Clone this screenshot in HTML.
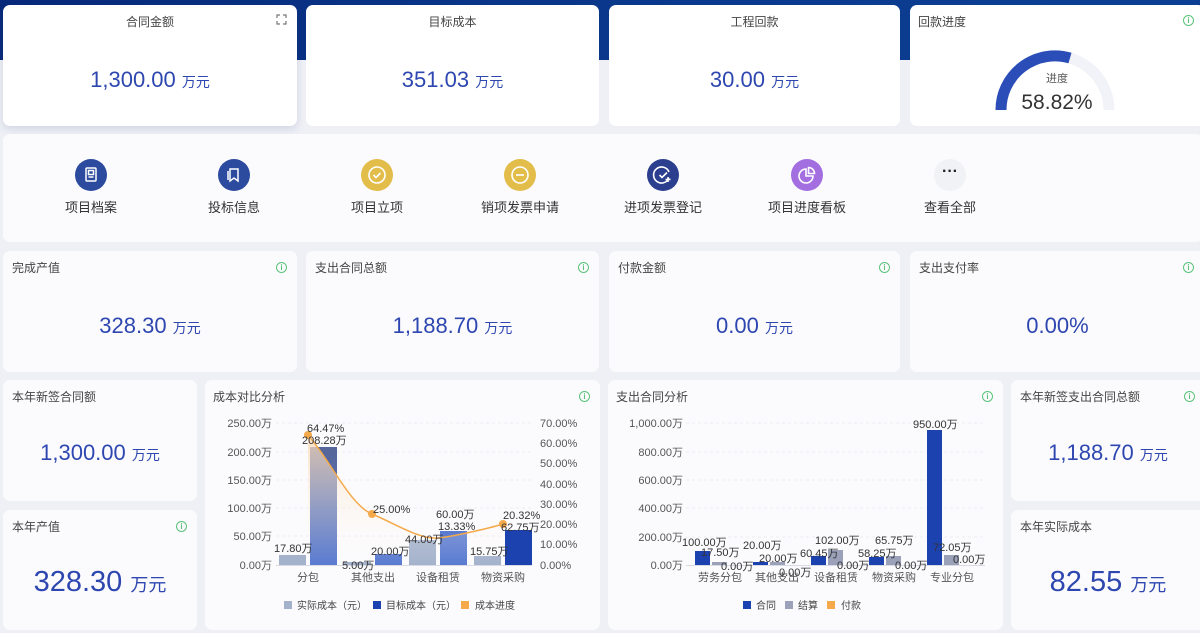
<!DOCTYPE html>
<html><head><meta charset="utf-8"><style>
*{margin:0;padding:0;box-sizing:border-box}
body{width:1200px;height:633px;overflow:hidden;background:#eef0f6;font-family:"Liberation Sans","Noto Sans CJK SC",sans-serif;position:relative;color:#333}
.band{position:absolute;left:0;top:0;width:1200px;height:60px;background:linear-gradient(90deg,#08297a,#0a3a8e 60%,#0c3f93)}
.c{position:absolute;background:#fbfbfd;border-radius:7px}
.w{background:#fff}
.t{position:absolute;font-size:12px;color:#444}
.tc{left:0;right:0;text-align:center;top:8px}
.tl{left:9px;top:8px}
.v{position:absolute;left:0;right:0;text-align:center;color:#2e47b0;font-size:22px}
.v span{font-size:14px}
.big{font-size:29px}.big span{font-size:18px}
.i{position:absolute;width:11px;height:11px;border:1.3px solid #5bc27a;border-radius:50%;color:#5bc27a;font-size:8px;line-height:9px;text-align:center;font-weight:bold}
.ic{position:absolute;top:159px;width:32px;height:32px;border-radius:50%}
.lb{position:absolute;top:197px;font-size:13px;color:#333;width:120px;text-align:center}
svg text{font-family:"Liberation Sans","Noto Sans CJK SC",sans-serif}
</style></head><body>
<div class="band"></div>

<div class="c w" style="left:3px;top:5px;width:294px;height:121px;box-shadow:0 3px 8px rgba(60,60,120,.15)"><div class="t tc">合同金额</div>
<svg style="position:absolute;left:273px;top:9px" width="11" height="11" viewBox="0 0 11 11" fill="none" stroke="#777" stroke-width="1.2"><path d="M1 4V1h3M7 1h3v3M10 7v3H7M4 10H1V7"/></svg>
<div class="v" style="top:62px">1,300.00 <span>万元</span></div></div>
<div class="c w" style="left:306px;top:5px;width:293px;height:121px"><div class="t tc">目标成本</div><div class="v" style="top:62px">351.03 <span>万元</span></div></div>
<div class="c w" style="left:609px;top:5px;width:291px;height:121px"><div class="t tc">工程回款</div><div class="v" style="top:62px">30.00 <span>万元</span></div></div>
<div class="c w" style="left:910px;top:5px;width:295px;height:121px"><div class="t" style="left:8px;top:8px">回款进度</div><div class="i" style="left:273px;top:10px">i</div>
<svg style="position:absolute;left:0;top:0" width="290" height="121"><path d="M91 105A54 54 0 0 1 199 105" fill="none" stroke="#f1f3f8" stroke-width="11"/><path d="M91 105A54 54 0 0 1 160 53" fill="none" stroke="#2a4db8" stroke-width="11"/>
<text x="147" y="77" font-size="11" fill="#555" text-anchor="middle">进度</text><text x="147" y="104" font-size="21" fill="#333" text-anchor="middle">58.82%</text></svg></div>

<div class="c" style="left:3px;top:134px;width:1200px;height:108px"></div>
<div class="ic" style="left:75px;background:#2c4a9e"><svg width="32" height="32" fill="none" stroke="#fff" stroke-width="1.5"><rect x="11" y="9" width="10" height="13" rx="1"/><rect x="13.5" y="11.5" width="5" height="4"/><path d="M13.5 18h5"/></svg></div>
<div class="lb" style="left:31px">项目档案</div>
<div class="ic" style="left:218px;background:#2c4a9e"><svg width="32" height="32" fill="none" stroke="#fff" stroke-width="1.5"><path d="M12 10h8v12l-4-3-4 3z"/><path d="M10 12v9"/></svg></div>
<div class="lb" style="left:174px">投标信息</div>
<div class="ic" style="left:361px;background:#e3bd4a"><svg width="32" height="32" fill="none" stroke="#fff" stroke-width="1.6"><circle cx="16" cy="16" r="8"/><path d="M12.5 16l2.5 2.5 4.5-4.5"/></svg></div>
<div class="lb" style="left:317px">项目立项</div>
<div class="ic" style="left:504px;background:#e3bd4a"><svg width="32" height="32" fill="none" stroke="#fff" stroke-width="1.6"><circle cx="16" cy="16" r="8"/><path d="M12 16h8"/></svg></div>
<div class="lb" style="left:460px">销项发票申请</div>
<div class="ic" style="left:647px;background:#2c3f8e"><svg width="32" height="32" fill="none" stroke="#fff" stroke-width="1.6"><path d="M22 13a8 8 0 1 0 0 6"/><path d="M12.5 16l2.5 2.5 5-5M21 18v5M18.5 20.5h5"/></svg></div>
<div class="lb" style="left:603px">进项发票登记</div>
<div class="ic" style="left:791px;background:#a36ee0"><svg width="32" height="32" fill="none" stroke="#fff" stroke-width="1.6"><path d="M15 10a7 7 0 1 0 7 7h-7z"/><path d="M17.5 8.5a6 6 0 0 1 6 6h-6z"/></svg></div>
<div class="lb" style="left:747px">项目进度看板</div>
<div class="ic" style="left:934px;background:#f1f2f5;color:#222;text-align:center;font-size:16px;line-height:26px;font-weight:bold">···</div>
<div class="lb" style="left:890px">查看全部</div>

<div class="c" style="left:3px;top:251px;width:294px;height:121px"><div class="t tl">完成产值</div><div class="i" style="left:273px;top:11px">i</div><div class="v" style="top:62px">328.30 <span>万元</span></div></div>
<div class="c" style="left:306px;top:251px;width:293px;height:121px"><div class="t tl">支出合同总额</div><div class="i" style="left:272px;top:11px">i</div><div class="v" style="top:62px">1,188.70 <span>万元</span></div></div>
<div class="c" style="left:609px;top:251px;width:291px;height:121px"><div class="t tl">付款金额</div><div class="i" style="left:270px;top:11px">i</div><div class="v" style="top:62px">0.00 <span>万元</span></div></div>
<div class="c" style="left:910px;top:251px;width:295px;height:121px"><div class="t tl">支出支付率</div><div class="i" style="left:273px;top:11px">i</div><div class="v" style="top:62px">0.00%</div></div>

<div class="c" style="left:3px;top:380px;width:194px;height:121px"><div class="t tl">本年新签合同额</div><div class="v" style="top:60px">1,300.00 <span>万元</span></div></div>
<div class="c" style="left:3px;top:510px;width:194px;height:120px"><div class="t tl">本年产值</div><div class="i" style="left:173px;top:11px">i</div><div class="v big" style="top:56px">328.30 <span>万元</span></div></div>
<div class="c" style="left:1011px;top:380px;width:194px;height:121px"><div class="t tl">本年新签支出合同总额</div><div class="i" style="left:173px;top:11px">i</div><div class="v" style="top:60px">1,188.70 <span>万元</span></div></div>
<div class="c" style="left:1011px;top:510px;width:194px;height:120px"><div class="t tl">本年实际成本</div><div class="v big" style="top:56px">82.55 <span>万元</span></div></div>

<div class="c" style="left:205px;top:380px;width:395px;height:250px"><div class="t" style="left:8px;top:8px">成本对比分析</div><div class="i" style="left:374px;top:11px">i</div></div>
<div class="c" style="left:608px;top:380px;width:395px;height:250px"><div class="t" style="left:8px;top:8px">支出合同分析</div><div class="i" style="left:374px;top:11px">i</div></div>

<svg style="position:absolute;left:0;top:0" width="1200" height="633" font-size="11">
<defs><linearGradient id="g1" x1="0" y1="0" x2="0" y2="1"><stop offset="0" stop-color="#566599"/><stop offset="1" stop-color="#5a7bd0"/></linearGradient>
<linearGradient id="ga" x1="0" y1="0" x2="0" y2="1"><stop offset="0" stop-color="#fbd9b5" stop-opacity=".8"/><stop offset="1" stop-color="#fff" stop-opacity="0"/></linearGradient></defs>
<g stroke="#eceef3" stroke-dasharray="3 3"><path d="M276 423H532M276 452H532M276 480H532M276 508H532M276 536H532"/>
<path d="M686 423H985M686 452H985M686 480H985M686 508H985M686 537H985"/></g>
<path d="M276 565.5H532M686 565.5H985" stroke="#d8dbe3"/>
<g fill="#555" text-anchor="end"><text x="272" y="427">250.00万</text><text x="272" y="456">200.00万</text><text x="272" y="484">150.00万</text><text x="272" y="512">100.00万</text><text x="272" y="540">50.00万</text><text x="272" y="569">0.00万</text></g>
<g fill="#555"><text x="540" y="427">70.00%</text><text x="540" y="447">60.00%</text><text x="540" y="467">50.00%</text><text x="540" y="488">40.00%</text><text x="540" y="508">30.00%</text><text x="540" y="528">20.00%</text><text x="540" y="548">10.00%</text><text x="540" y="569">0.00%</text></g>
<g fill="#a4b2cc"><rect x="279" y="555" width="27" height="10"/><rect x="344" y="562" width="27" height="3"/><rect x="409" y="540" width="27" height="25"/><rect x="474" y="556" width="27" height="9"/></g>
<rect x="310" y="447" width="27" height="118" fill="url(#g1)"/><rect x="375" y="554" width="27" height="11" fill="#5a7bd0"/><rect x="440" y="531" width="27" height="34" fill="#5a7bd0"/><rect x="505" y="530" width="27" height="35" fill="#1c42b0"/>
<path d="M308 435C330 460 350 505 372 514S420 540 438 538S490 528 503 524V565H308Z" fill="url(#ga)"/>
<path d="M308 435C330 460 350 505 372 514S420 540 438 538S490 528 503 524" fill="none" stroke="#f4a94a" stroke-width="1.5"/>
<g fill="#f4a94a"><circle cx="308" cy="435" r="4"/><circle cx="372" cy="514" r="4"/><circle cx="503" cy="524" r="4"/></g>
<g fill="#333"><text x="307" y="432">64.47%</text><text x="302" y="444">208.28万</text><text x="274" y="552">17.80万</text><text x="342" y="569">5.00万</text><text x="371" y="555">20.00万</text><text x="373" y="513">25.00%</text><text x="436" y="518">60.00万</text><text x="438" y="530">13.33%</text><text x="405" y="543">44.00万</text><text x="503" y="519">20.32%</text><text x="501" y="531">62.75万</text><text x="470" y="555">15.75万</text></g>
<g fill="#555" text-anchor="middle"><text x="308" y="581">分包</text><text x="373" y="581">其他支出</text><text x="438" y="581">设备租赁</text><text x="503" y="581">物资采购</text></g>
<rect x="284" y="601" width="8" height="8" fill="#a4b2cc"/><text x="297" y="609" fill="#444" font-size="10">实际成本（元）</text>
<rect x="373" y="601" width="8" height="8" fill="#1c42b0"/><text x="386" y="609" fill="#444" font-size="10">目标成本（元）</text>
<rect x="461" y="601" width="8" height="8" fill="#f4a94a"/><text x="475" y="609" fill="#444" font-size="10">成本进度</text>

<g fill="#555" text-anchor="end"><text x="683" y="427">1,000.00万</text><text x="683" y="456">800.00万</text><text x="683" y="484">600.00万</text><text x="683" y="512">400.00万</text><text x="683" y="541">200.00万</text><text x="683" y="569">0.00万</text></g>
<g fill="#1c42b0"><rect x="695" y="551" width="15" height="14"/><rect x="753" y="562" width="15" height="3"/><rect x="811" y="556" width="15" height="9"/><rect x="869" y="557" width="15" height="8"/><rect x="927" y="430" width="15" height="135"/></g>
<g fill="#9aa1b8"><rect x="712" y="562" width="15" height="3"/><rect x="770" y="562" width="15" height="3"/><rect x="828" y="550" width="15" height="15"/><rect x="886" y="556" width="15" height="9"/><rect x="944" y="555" width="15" height="10"/></g>
<g fill="#333"><text x="682" y="546">100.00万</text><text x="701" y="556">17.50万</text><text x="721" y="570">0.00万</text><text x="743" y="549">20.00万</text><text x="759" y="562">20.00万</text><text x="779" y="576">0.00万</text><text x="815" y="544">102.00万</text><text x="800" y="557">60.45万</text><text x="837" y="569">0.00万</text><text x="875" y="544">65.75万</text><text x="858" y="557">58.25万</text><text x="895" y="569">0.00万</text><text x="913" y="428">950.00万</text><text x="933" y="551">72.05万</text><text x="953" y="563">0.00万</text></g>
<g fill="#555" text-anchor="middle"><text x="720" y="581">劳务分包</text><text x="777" y="581">其他支出</text><text x="836" y="581">设备租赁</text><text x="894" y="581">物资采购</text><text x="952" y="581">专业分包</text></g>
<rect x="743" y="601" width="8" height="8" fill="#1c42b0"/><text x="756" y="609" fill="#444" font-size="10">合同</text>
<rect x="785" y="601" width="8" height="8" fill="#9aa1b8"/><text x="798" y="609" fill="#444" font-size="10">结算</text>
<rect x="827" y="601" width="8" height="8" fill="#f4a94a"/><text x="841" y="609" fill="#444" font-size="10">付款</text>
</svg>
</body></html>
